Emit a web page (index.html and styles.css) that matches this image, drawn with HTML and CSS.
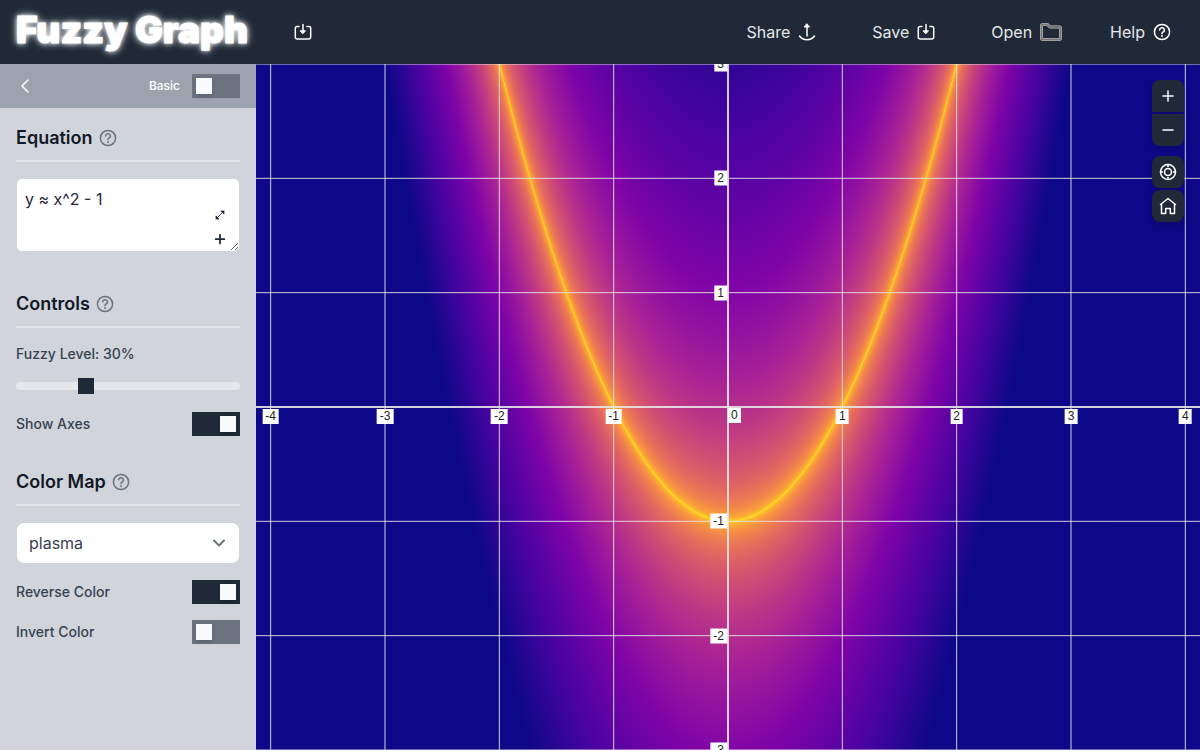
FILE: index.html
```
<!DOCTYPE html>
<html lang="en">
<head>
  <meta charset="UTF-8" />
  <meta name="viewport" content="width=device-width, initial-scale=1.0" />
  <title>Fuzzy Graph</title>
  <link rel="stylesheet" href="styles.css">
</head>
<body>
  <svg class="sprite" aria-hidden="true">
    <symbol id="icon-save" viewBox="0 0 20 20">
      <path d="M6 4.5H4A1.7 1.7 0 0 0 2.3 6.2v9.1A1.7 1.7 0 0 0 4 17h12a1.7 1.7 0 0 0 1.7-1.7V6.2A1.7 1.7 0 0 0 16 4.5h-2M10 2.5v7" />
      <path d="M7.5 8.8h5L10 11.6z" fill="currentColor" stroke-width="1" />
    </symbol>
    <symbol id="icon-help" viewBox="0 0 20 20">
      <circle cx="10" cy="10" r="7.6" />
      <path d="M7.6 8a2.4 2.2 0 1 1 3.6 1.9c-.8.5-1.2.9-1.2 1.7" />
      <path d="M10 13.6v.9" />
    </symbol>
  </svg>

  <header class="header">
    <h1 class="logo">Fuzzy Graph</h1>
    <button class="nav-button install" aria-label="Install"><svg class="icon"><use href="#icon-save" /></svg></button>
    <nav class="nav">
      <button class="nav-button">Share
        <svg class="icon" viewBox="0 0 20 20"><path d="M10 14V4M2.5 14c1.8 2.5 4.4 3.7 7.5 3.7s5.7-1.2 7.5-3.7" /><path d="M7.5 5h5L10 2z" fill="currentColor" stroke-width="1" /></svg>
      </button>
      <button class="nav-button">Save
        <svg class="icon"><use href="#icon-save" /></svg>
      </button>
      <button class="nav-button nav-open">Open
        <svg class="icon icon-folder" viewBox="0 0 24 20">
          <path class="folder-edge" d="M2.5 4A1.5 1.5 0 0 1 4 2.5h4.5L11 5h9a1.5 1.5 0 0 1 1.5 1.5V16a1.5 1.5 0 0 1-1.5 1.5H4A1.5 1.5 0 0 1 2.5 16z" />
          <path class="folder-line" d="M2.5 4A1.5 1.5 0 0 1 4 2.5h4.5L11 5h9a1.5 1.5 0 0 1 1.5 1.5V16a1.5 1.5 0 0 1-1.5 1.5H4A1.5 1.5 0 0 1 2.5 16z" />
        </svg>
      </button>
      <button class="nav-button">Help
        <svg class="icon"><use href="#icon-help" /></svg>
      </button>
    </nav>
  </header>

  <div class="main">
    <aside class="sidebar">
      <div class="sidebar-top">
        <button class="back" aria-label="Collapse"><svg class="icon" viewBox="0 0 20 20"><path d="M12 4 6 10l6 6" /></svg></button>
        <label for="basic">Basic</label>
        <input type="checkbox" class="toggle" id="basic">
      </div>

      <div class="sidebar-body">
        <section class="section">
          <h2>Equation <svg class="icon"><use href="#icon-help" /></svg></h2>
          <div class="equation">
            <textarea id="equation" aria-label="Equation" spellcheck="false">y ≈ x^2 - 1</textarea>
            <div class="equation-actions">
              <button aria-label="Expand"><svg viewBox="0 0 16 16"><path d="M3.500 12.500 12.500 3.500" /><path d="M9.500 3.500h3v3zM3.500 9.500v3h3z" fill="currentColor" /></svg></button>
              <button aria-label="Add"><svg class="add" viewBox="0 0 16 16"><path d="M8 3v10M3 8h10" /></svg></button>
            </div>
          </div>
        </section>

        <section class="section">
          <h2>Controls <svg class="icon"><use href="#icon-help" /></svg></h2>
          <label class="range-label" for="fuzzy">Fuzzy Level: 30%</label>
          <input type="range" id="fuzzy" min="0" max="100" value="30">
          <div class="row">
            <label for="axes">Show Axes</label>
            <input type="checkbox" class="toggle" id="axes" checked>
          </div>
        </section>

        <section class="section">
          <h2>Color Map <svg class="icon"><use href="#icon-help" /></svg></h2>
          <div class="select">
            <select id="colormap" aria-label="Color Map">
              <option>plasma</option>
              <option>viridis</option>
              <option>magma</option>
            </select>
            <svg viewBox="0 0 16 16"><path d="M3 5.5 8 10.5l5-5" /></svg>
          </div>
          <div class="row">
            <label for="reverse">Reverse Color</label>
            <input type="checkbox" class="toggle" id="reverse" checked>
          </div>
          <div class="row">
            <label for="invert">Invert Color</label>
            <input type="checkbox" class="toggle" id="invert">
          </div>
        </section>
      </div>
    </aside>

    <main class="graph" id="graph">
      <canvas id="canvas"></canvas>
      <div class="labels" id="labels"></div>
      <div class="map-controls">
        <div class="zoom">
          <button aria-label="Zoom in"><svg viewBox="0 0 20 20"><path d="M10 5v10M5 10h10" /></svg></button>
          <button aria-label="Zoom out"><svg viewBox="0 0 20 20"><path d="M5 10h10" /></svg></button>
        </div>
        <button aria-label="Center"><svg viewBox="0 0 20 20"><circle cx="10" cy="10" r="7.5" /><circle cx="10" cy="10" r="3.5" /><path d="M10 2.5v2M10 15.5v2M2.5 10h2M15.5 10h2" /></svg></button>
        <button aria-label="Home"><svg viewBox="0 0 20 20"><path d="M2.5 8.5 10 2.5l7.5 6M3.5 8v9.5h4.2v-5h4.6v5h4.2V8" /></svg></button>
      </div>
    </main>
  </div>

  <script src="graph.js"></script>
</body>
</html>
```
FILE: styles.css
```
:root {
  --dark: #1f2937;
  --panel: #d1d5db;
  --line: #e5e7eb;
  --muted: #6b7280;
  --text: #374151;
}
* {
  box-sizing: border-box;
}
body {
  margin: 0;
  height: 100vh;
  display: flex;
  flex-direction: column;
  overflow: hidden;
  font-family: Inter, sans-serif;
  color: var(--text);
}
button {
  display: flex;
  align-items: center;
  justify-content: center;
  padding: 0;
  border: none;
  background: none;
  color: inherit;
  font: inherit;
  cursor: pointer;
}
svg {
  fill: none;
  stroke: currentColor;
  stroke-width: 1.5;
  stroke-linecap: round;
  stroke-linejoin: round;
}
.sprite {
  display: none;
}
.icon {
  width: 20px;
  height: 20px;
  flex: none;
}

/* header */
.header {
  display: flex;
  align-items: center;
  flex: none;
  height: 64px;
  padding: 0 28px 0 16px;
  background: var(--dark);
  color: var(--line);
}
.logo {
  margin: 0 0 4px;
  font-size: 37px;
  line-height: 40px;
  font-weight: 900;
  color: white;
  -webkit-text-stroke: 1px white;
  text-shadow: 0 0 4px white, 0 0 8px white;
}
.install {
  margin-left: 45px;
}
.nav {
  display: flex;
  gap: 55px;
  margin-left: auto;
}
.nav-button {
  gap: 7px;
  font-size: 16px;
  line-height: 24px;
}
.nav-button .icon {
  color: white;
}
.nav-open {
  margin-right: -8px;
}
.icon-folder {
  width: 24px;
}
.folder-edge {
  stroke: #c4c4c4;
  stroke-width: 3;
}
.folder-line {
  stroke: #777;
  stroke-width: 2;
}

/* sidebar */
.main {
  display: flex;
  flex: 1;
  min-height: 0;
}
.sidebar {
  flex: none;
  width: 256px;
  background: var(--panel);
  font-size: 14px;
  line-height: 20px;
  font-weight: 500;
}
.sidebar-top {
  display: flex;
  align-items: center;
  gap: 12px;
  height: 44px;
  padding: 0 16px;
  background: #9ca3af;
  color: white;
  font-size: 12px;
}
.back {
  margin-right: auto;
}
.sidebar-body {
  padding: 16px;
}
.section {
  margin-bottom: 32px;
}
h2 {
  display: flex;
  align-items: center;
  gap: 5px;
  margin: 0 0 16px;
  padding-bottom: 8px;
  border-bottom: 2px solid var(--line);
  font-size: 18px;
  line-height: 28px;
  font-weight: 600;
  color: #111827;
}
h2 .icon {
  color: var(--muted);
}
.equation {
  position: relative;
  margin-bottom: 38px;
}
textarea {
  display: block;
  width: 100%;
  height: 74px;
  padding: 8px;
  border: 1px solid var(--panel);
  border-radius: 6px;
  background: white;
  color: var(--dark);
  font: 400 16px/24px Inter, sans-serif;
}
.equation-actions {
  position: absolute;
  right: 12px;
  bottom: 1px;
  color: var(--dark);
}
.equation-actions button {
  width: 16px;
  height: 24px;
}
.equation-actions svg {
  width: 14px;
  height: 14px;
  stroke-width: 1;
}
.equation-actions .add {
  stroke-width: 2;
}
.range-label {
  display: block;
}
input[type="range"] {
  -webkit-appearance: none;
  appearance: none;
  display: block;
  width: 100%;
  height: 8px;
  margin: 18px 0 22px;
  border-radius: 4px;
  background: var(--line);
}
input[type="range"]::-webkit-slider-thumb {
  -webkit-appearance: none;
  width: 16px;
  height: 16px;
  background: var(--dark);
}
.row {
  display: flex;
  align-items: center;
  justify-content: space-between;
  margin-top: 16px;
}
.toggle {
  appearance: none;
  width: 48px;
  height: 24px;
  margin: 0;
  padding: 4px;
  background: var(--muted);
}
.toggle::before {
  content: "";
  display: block;
  width: 16px;
  height: 16px;
  background: #f9fafb;
  box-shadow: 0 2px 4px rgba(0, 0, 0, 0.15);
}
.toggle:checked {
  background: var(--dark);
}
.toggle:checked::before {
  margin-left: auto;
}
.select {
  position: relative;
}
select {
  appearance: none;
  display: block;
  width: 100%;
  height: 42px;
  padding: 0 12px;
  border: 1px solid var(--panel);
  border-radius: 8px;
  background: white;
  color: var(--text);
  font: 400 16px/24px Inter, sans-serif;
}
.select svg {
  position: absolute;
  top: 13px;
  right: 13px;
  width: 16px;
  height: 16px;
  color: var(--muted);
  stroke-width: 2;
  pointer-events: none;
}

/* graph */
.graph {
  position: relative;
  flex: 1;
  min-width: 0;
  overflow: hidden;
  background: #0d0887;
}
canvas {
  display: block;
  width: 100%;
  height: 100%;
}
.labels span {
  position: absolute;
  padding: 0 3px;
  background: white;
  color: #222;
  font: 12px/15px "Liberation Sans", Arial, sans-serif;
}
.labels .x {
  transform: translate(-50%, 1px);
}
.labels .y {
  transform: translate(calc(-100% - 1px), -50%);
}
.map-controls {
  position: absolute;
  top: 16px;
  right: 16px;
  display: flex;
  flex-direction: column;
  gap: 2px;
  color: white;
}
.map-controls button {
  width: 32px;
  height: 32px;
  border-radius: 8px;
  background: var(--dark);
  box-shadow: 0 4px 6px rgba(0, 0, 0, 0.15);
}
.map-controls svg {
  width: 20px;
  height: 20px;
}
.zoom {
  display: flex;
  flex-direction: column;
  gap: 2px;
  margin-bottom: 8px;
}
.zoom button:first-child {
  border-radius: 8px 8px 0 0;
}
.zoom button:last-child {
  border-radius: 0 0 8px 8px;
}
```
FILE: graph.js
```
const PLASMA = [
  [13, 8, 135], [75, 3, 161], [125, 3, 168], [168, 34, 150], [203, 70, 121],
  [229, 107, 93], [248, 148, 65], [253, 195, 40], [240, 249, 33]
];
const FALLOFF = 1 / 3;
const RANGE = 5;

const graph = document.getElementById('graph');
const canvas = document.getElementById('canvas');
const labels = document.getElementById('labels');

function color(v) {
  const t = Math.min(Math.max(v, 0), 1) * (PLASMA.length - 1);
  const i = Math.min(Math.floor(t), PLASMA.length - 2);
  return PLASMA[i].map((c, k) => c + (PLASMA[i + 1][k] - c) * (t - i));
}

function addLabel(value, left, top, axis) {
  const span = document.createElement('span');
  span.textContent = value;
  span.className = axis;
  span.style.left = left + 'px';
  span.style.top = top + 'px';
  labels.appendChild(span);
}

function draw() {
  const w = canvas.width = graph.clientWidth;
  const h = canvas.height = graph.clientHeight;
  const ctx = canvas.getContext('2d');
  const unit = h / 6;
  const cx = w / 2;
  const cy = h / 2;

  const image = ctx.createImageData(w, h);
  for (let j = 0; j < h; j++) {
    for (let i = 0; i < w; i++) {
      const x = (i + 0.5 - cx) / unit;
      const y = (cy - j - 0.5) / unit;
      const diff = Math.abs(y - (x * x - 1));
      const rgb = color(1 - Math.pow(diff / RANGE, FALLOFF));
      image.data.set([rgb[0], rgb[1], rgb[2], 255], (j * w + i) * 4);
    }
  }
  ctx.putImageData(image, 0, 0);

  // grid
  const nx = Math.floor(cx / unit);
  ctx.strokeStyle = 'rgba(230, 230, 230, 0.9)';
  for (let n = -nx; n <= nx; n++) {
    ctx.lineWidth = n === 0 ? 2 : 1;
    ctx.beginPath();
    ctx.moveTo(cx + n * unit, 0);
    ctx.lineTo(cx + n * unit, h);
    ctx.stroke();
  }
  for (let n = -3; n <= 3; n++) {
    ctx.lineWidth = n === 0 ? 2 : 1;
    ctx.beginPath();
    ctx.moveTo(0, cy - n * unit);
    ctx.lineTo(w, cy - n * unit);
    ctx.stroke();
  }

  labels.textContent = '';
  for (let n = -nx; n <= nx; n++) {
    if (n !== 0) addLabel(n, cx + n * unit, cy + 1, 'x');
  }
  for (let n = -3; n <= 3; n++) {
    if (n !== 0) addLabel(n, cx, cy - n * unit, 'y');
  }
  addLabel(0, cx, cy + 1, 'origin');
}

draw();
window.addEventListener('resize', draw);
```
